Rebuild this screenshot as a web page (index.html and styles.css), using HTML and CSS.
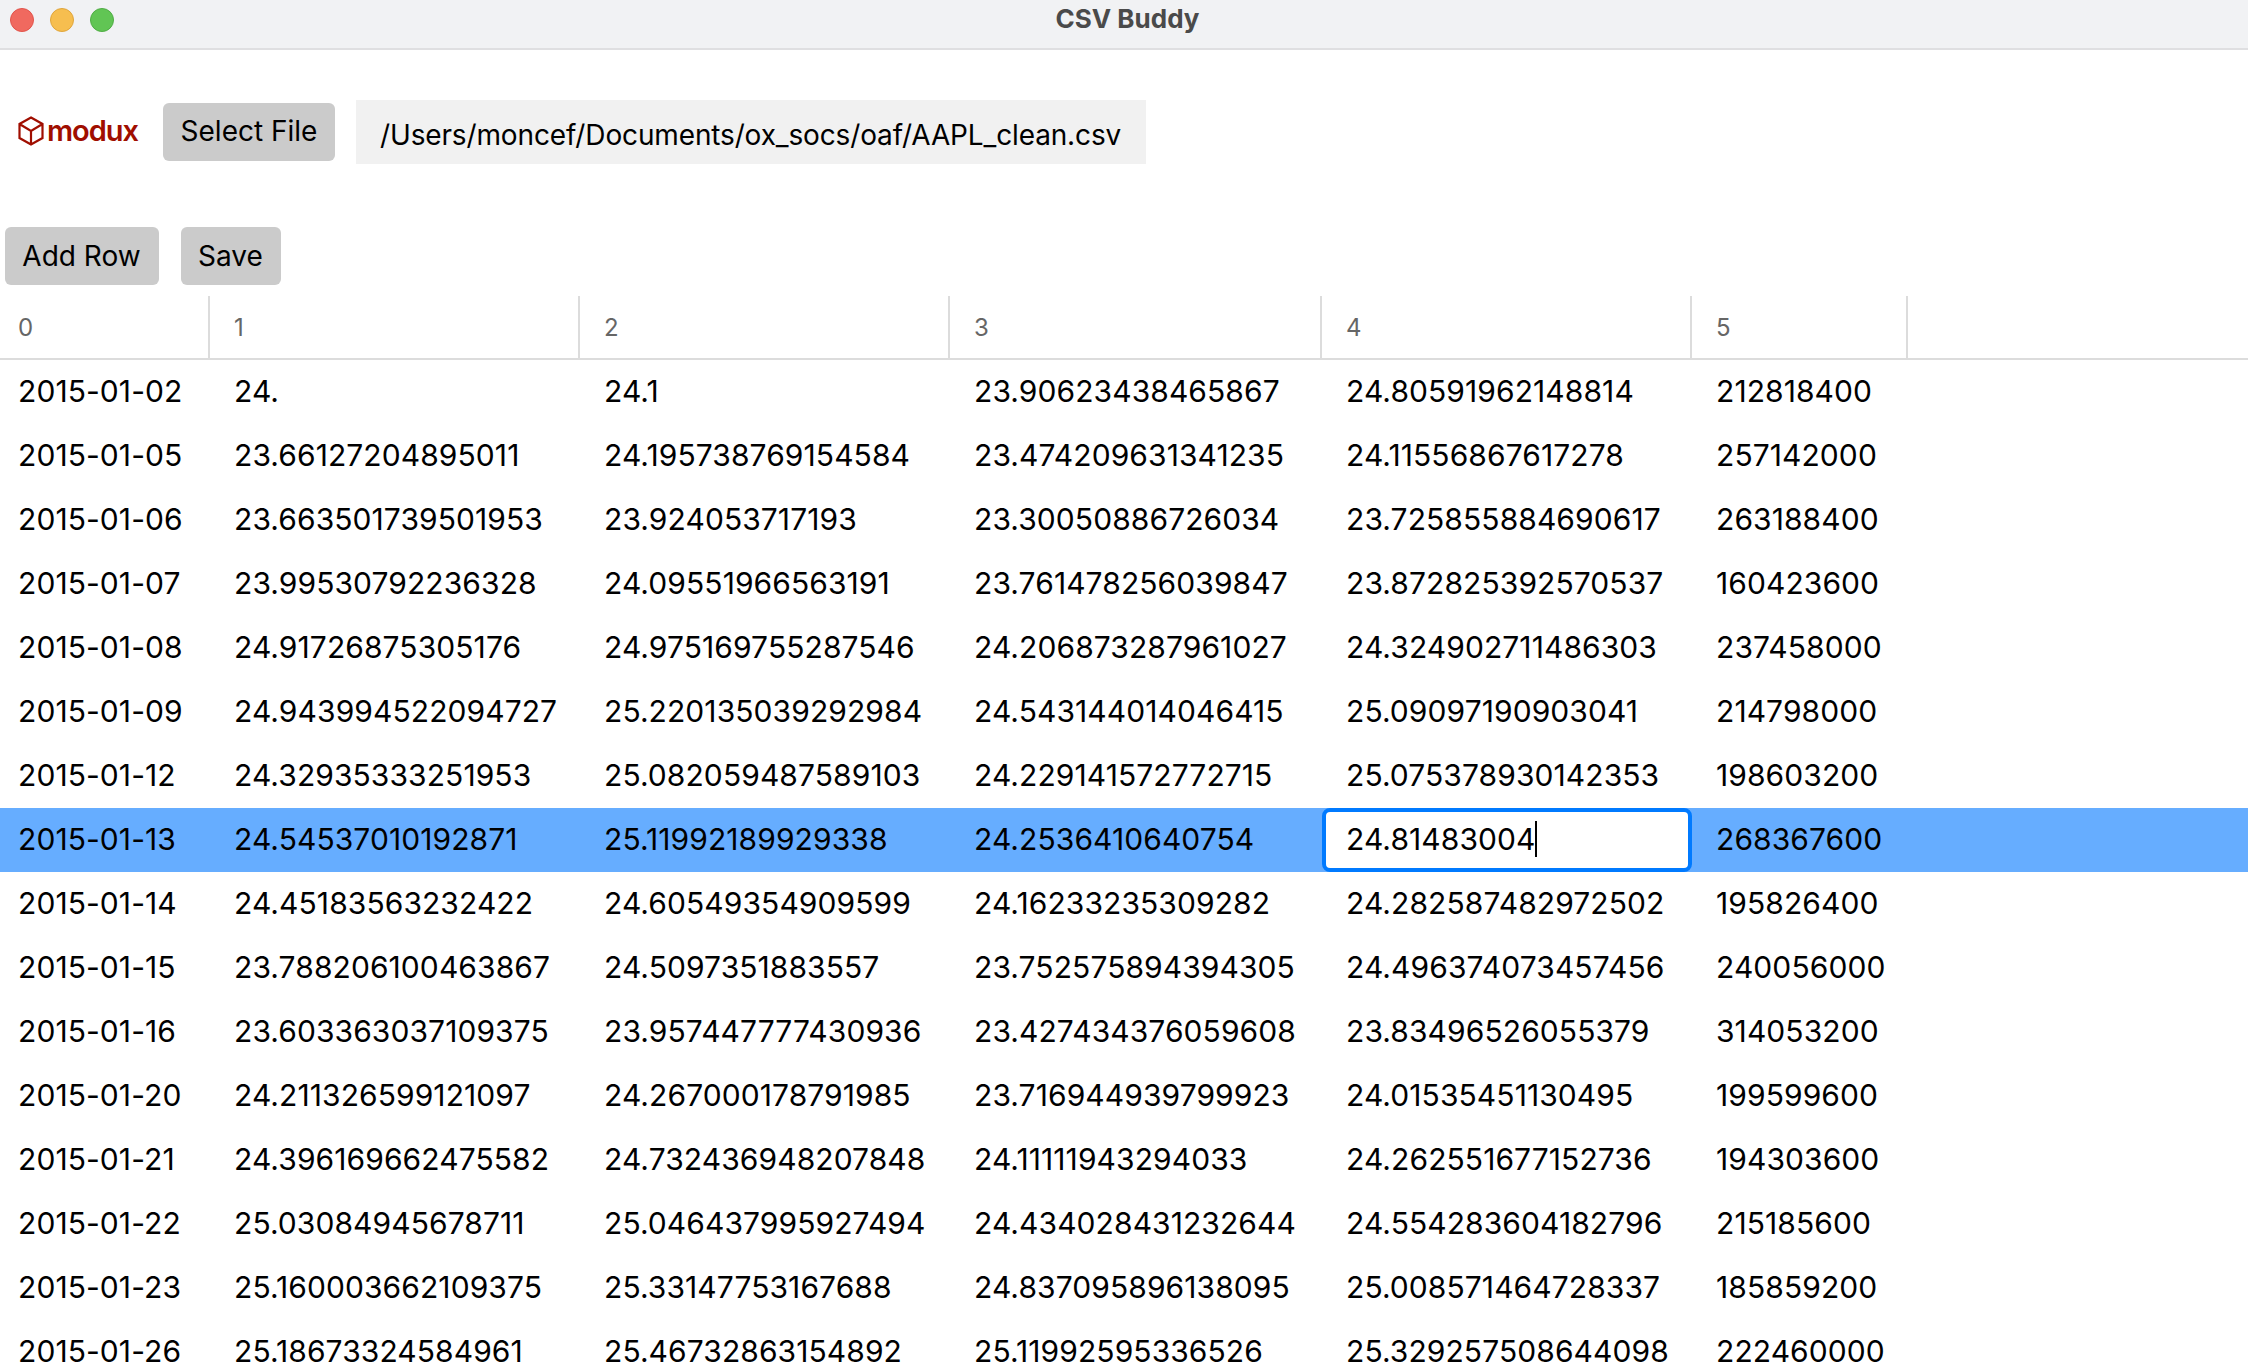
FILE: index.html
```html
<!DOCTYPE html>
<html lang="en">
<head>
<meta charset="utf-8">
<title>CSV Buddy</title>
<link rel="stylesheet" href="styles.css">
</head>
<body>
<header class="titlebar">
  <div class="lights"><span class="light red"></span><span class="light yellow"></span><span class="light green"></span></div>
  <div class="title">CSV Buddy</div>
</header>
<section class="file-bar">
  <div class="logo">
    <svg class="logo-icon" viewBox="0 0 26 30" width="26" height="30" aria-hidden="true"><path d="M13 1.5 24.5 8v14L13 28.5 1.5 22V8Z M1.5 8 13 15 24.5 8 M13 15v13.5" fill="none" stroke="#a00e00" stroke-width="2.2"/></svg>
    <span class="logo-text">modux</span>
  </div>
  <button class="btn select-btn">Select File</button>
  <div class="path">/Users/moncef/Documents/ox_socs/oaf/AAPL_clean.csv</div>
</section>
<section class="action-bar">
  <button class="btn add-btn">Add Row</button>
  <button class="btn save-btn">Save</button>
</section>
<table class="grid">
  <colgroup><col class="c0"><col class="c1"><col class="c2"><col class="c3"><col class="c4"><col class="c5"><col></colgroup>
  <thead><tr><th>0</th><th>1</th><th>2</th><th>3</th><th>4</th><th>5</th><th class="filler"></th></tr></thead>
  <tbody>
    <tr><td>2015-01-02</td><td>24.</td><td>24.1</td><td>23.90623438465867</td><td>24.80591962148814</td><td>212818400</td><td></td></tr>
    <tr><td>2015-01-05</td><td>23.66127204895011</td><td>24.195738769154584</td><td>23.474209631341235</td><td>24.11556867617278</td><td>257142000</td><td></td></tr>
    <tr><td>2015-01-06</td><td>23.663501739501953</td><td>23.924053717193</td><td>23.30050886726034</td><td>23.725855884690617</td><td>263188400</td><td></td></tr>
    <tr><td>2015-01-07</td><td>23.99530792236328</td><td>24.09551966563191</td><td>23.761478256039847</td><td>23.872825392570537</td><td>160423600</td><td></td></tr>
    <tr><td>2015-01-08</td><td>24.91726875305176</td><td>24.975169755287546</td><td>24.206873287961027</td><td>24.324902711486303</td><td>237458000</td><td></td></tr>
    <tr><td>2015-01-09</td><td>24.943994522094727</td><td>25.220135039292984</td><td>24.543144014046415</td><td>25.09097190903041</td><td>214798000</td><td></td></tr>
    <tr><td>2015-01-12</td><td>24.32935333251953</td><td>25.082059487589103</td><td>24.229141572772715</td><td>25.075378930142353</td><td>198603200</td><td></td></tr>
    <tr class="selected"><td>2015-01-13</td><td>24.54537010192871</td><td>25.11992189929338</td><td>24.2536410640754</td><td class="editing"><div class="editor"><span>24.81483004</span><i class="caret"></i></div></td><td>268367600</td><td></td></tr>
    <tr><td>2015-01-14</td><td>24.45183563232422</td><td>24.60549354909599</td><td>24.16233235309282</td><td>24.282587482972502</td><td>195826400</td><td></td></tr>
    <tr><td>2015-01-15</td><td>23.788206100463867</td><td>24.5097351883557</td><td>23.752575894394305</td><td>24.496374073457456</td><td>240056000</td><td></td></tr>
    <tr><td>2015-01-16</td><td>23.603363037109375</td><td>23.957447777430936</td><td>23.427434376059608</td><td>23.83496526055379</td><td>314053200</td><td></td></tr>
    <tr><td>2015-01-20</td><td>24.211326599121097</td><td>24.267000178791985</td><td>23.716944939799923</td><td>24.01535451130495</td><td>199599600</td><td></td></tr>
    <tr><td>2015-01-21</td><td>24.396169662475582</td><td>24.732436948207848</td><td>24.11111943294033</td><td>24.262551677152736</td><td>194303600</td><td></td></tr>
    <tr><td>2015-01-22</td><td>25.03084945678711</td><td>25.046437995927494</td><td>24.434028431232644</td><td>24.554283604182796</td><td>215185600</td><td></td></tr>
    <tr><td>2015-01-23</td><td>25.160003662109375</td><td>25.33147753167688</td><td>24.837095896138095</td><td>25.008571464728337</td><td>185859200</td><td></td></tr>
    <tr><td>2015-01-26</td><td>25.18673324584961</td><td>25.46732863154892</td><td>25.11992595336526</td><td>25.329257508644098</td><td>222460000</td><td></td></tr>
  </tbody>
</table>
</body>
</html>
```
FILE: styles.css
```css
* { box-sizing: border-box; }
html, body { margin: 0; height: 100%; overflow: hidden; background: #fff; }
body { font-family: Inter, "Liberation Sans", sans-serif; color: #000; }

.titlebar { height: 50px; position: relative; display: flex; align-items: center; justify-content: center; background: #f1f2f4; border-bottom: 2px solid #dfdfe1; }
.lights { position: absolute; left: 10px; top: 8px; display: flex; gap: 16px; }
.light { width: 24px; height: 24px; border-radius: 50%; }
.red { background: #f0695f; border: 1px solid #e2544b; }
.yellow { background: #f6be4f; border: 1px solid #e0a63c; }
.green { background: #61c554; border: 1px solid #50ad45; }
.title { font-size: 26px; font-weight: 700; color: #4a4a4a; margin-bottom: 12px; margin-left: 7px; }

.file-bar { display: flex; align-items: flex-start; padding: 50px 0 0 18px; height: 177px; }
.logo { display: flex; align-items: center; gap: 3px; margin-top: 16px; width: 145px; }
.logo-icon { display: block; }
.logo-text { font-size: 29px; font-weight: 600; color: #a00e00; letter-spacing: -1px; line-height: 30px; }

.btn { font: 400 28px Inter, "Liberation Sans", sans-serif; color: #000; background: #cbcbcb; border: 0; border-radius: 6px; height: 58px; padding: 0; }
.select-btn { width: 172px; margin-top: 3px; padding-bottom: 2px; }
.path { margin-left: 21px; width: 790px; height: 64px; background: #f1f1f1; font-size: 28px; letter-spacing: -0.14px; line-height: 70px; padding-left: 24px; white-space: nowrap; }

.action-bar { display: flex; gap: 22px; padding-left: 5px; height: 69px; }
.add-btn { width: 154px; padding-right: 1px; }
.save-btn { width: 100px; padding-right: 1px; }

.grid { width: 100%; table-layout: fixed; border-collapse: separate; border-spacing: 0; font-size: 30px; letter-spacing: 0.08px; }
.c0 { width: 210px; }
.c1, .c2 { width: 370px; }
.c3 { width: 372px; }
.c4 { width: 370px; }
.c5 { width: 216px; }
.grid th { height: 64px; padding: 0 0 0 24px; font-size: 24px; font-weight: 400; color: #666; text-align: left; border-right: 2px solid #dcdcdc; border-bottom: 2px solid #dcdcdc; }
.grid th:first-child { padding-left: 18px; }
.grid th.filler { border-right: 0; }
.grid td { height: 64px; padding: 0 0 2px 24px; white-space: nowrap; overflow: hidden; }
.grid td:first-child { padding-left: 18px; }
.selected td { background: #66adff; }
.grid td.editing { padding: 0; }
.editor { height: 64px; border: 4px solid #007aff; border-radius: 8px; background: #fff; display: flex; align-items: center; padding: 0 0 2px 20px; }
.caret { display: block; width: 2px; height: 36px; background: #000; margin-left: -1px; }
```
